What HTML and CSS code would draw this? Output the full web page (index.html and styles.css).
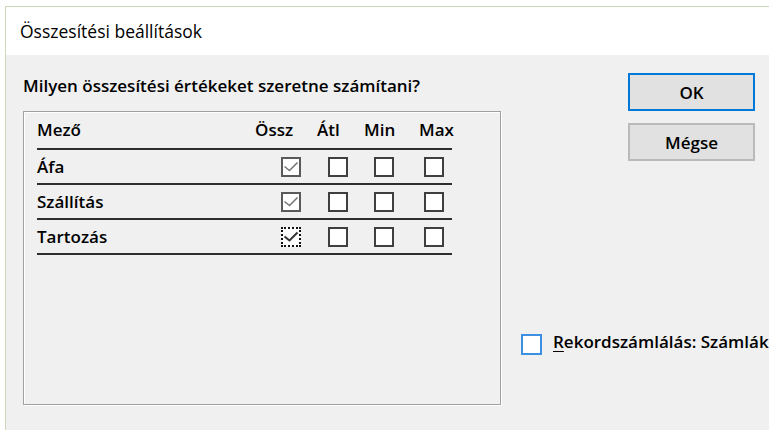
FILE: index.html
```html
<!DOCTYPE html>
<html lang="hu">
<head>
<meta charset="utf-8">
<title>Összesítési beállítások</title>
<link rel="stylesheet" href="styles.css">
</head>
<body>
<div class="window">
  <div class="titlebar">Összesítési beállítások</div>
  <div class="client">
    <div class="main">
      <div class="prompt">Milyen összesítési értékeket szeretne számítani?</div>
      <div class="group">
        <div class="sums">
          <div class="row head">
            <div class="field">Mező</div>
            <div class="cell">Össz</div>
            <div class="cell">Átl</div>
            <div class="cell">Min</div>
            <div class="cell">Max</div>
          </div>
          <div class="row">
            <div class="field">Áfa</div>
            <div class="cell col-sum"><span class="check checked"><svg viewBox="0 0 20 20"><polyline points="3.5,9.5 8.5,13.5 16.5,5.5"/></svg></span></div>
            <div class="cell col-avg"><span class="check"></span></div>
            <div class="cell col-min"><span class="check"></span></div>
            <div class="cell col-max"><span class="check"></span></div>
          </div>
          <div class="row">
            <div class="field">Szállítás</div>
            <div class="cell col-sum"><span class="check checked"><svg viewBox="0 0 20 20"><polyline points="3.5,9.5 8.5,13.5 16.5,5.5"/></svg></span></div>
            <div class="cell col-avg"><span class="check"></span></div>
            <div class="cell col-min"><span class="check"></span></div>
            <div class="cell col-max"><span class="check"></span></div>
          </div>
          <div class="row">
            <div class="field">Tartozás</div>
            <div class="cell col-sum"><span class="check checked focused"><svg viewBox="0 0 20 20"><polyline points="3.5,9.5 8.5,13.5 16.5,5.5"/></svg></span></div>
            <div class="cell col-avg"><span class="check"></span></div>
            <div class="cell col-min"><span class="check"></span></div>
            <div class="cell col-max"><span class="check"></span></div>
          </div>
        </div>
      </div>
    </div>
    <div class="side">
      <button class="btn default" type="button">OK</button>
      <button class="btn" type="button">Mégse</button>
      <label class="record">
        <span class="record-box"></span>
        <span class="record-text"><u>R</u>ekordszámlálás: Számlák</span>
      </label>
    </div>
  </div>
</div>
</body>
</html>
```

FILE: styles.css
```css
html, body {
  margin: 0;
  padding: 0;
  background: #ffffff;
  overflow: hidden;
}

body {
  font-family: "Open Sans", "Noto Sans", "DejaVu Sans", sans-serif;
  color: #000000;
}

/* dialog frame: thin tinted edge along top and left */
.window {
  margin: 6px 0 0 5px;
  width: calc(100vw - 5px);
  border-top: 1px solid #cdd9bd;
  border-left: 1px solid #cdd9bd;
  box-sizing: border-box;
}

.titlebar {
  height: 48px;
  line-height: 48px;
  padding-left: 14px;
  font-size: 17.5px;
  font-weight: 400;
  background: #ffffff;
}

.client {
  box-sizing: border-box;
  display: flex;
  align-items: flex-start;
  height: 375px;
  padding: 18px 0 0 17px;
  background: #f0f0f0;
  overflow: hidden;
}

.main {
  width: 478px;
  flex: none;
}

.prompt {
  margin-top: 3px;
  font-size: 17px;
  font-weight: 600;
  line-height: 20px;
  white-space: nowrap;
}

/* etched group frame */
.group {
  box-sizing: border-box;
  margin-top: 15px;
  height: 294px;
  padding: 0 0 0 13px;
  border: 1px solid #a0a0a0;
  box-shadow: 1px 1px 0 #ffffff, inset 1px 1px 0 #ffffff;
}

.sums {
  width: 415px;
}

.row {
  display: grid;
  grid-template-columns: 218px 62px 47px 55px 33px;
  align-items: center;
  height: 33px;
  border-bottom: 2px solid #2e2e2e;
  font-size: 17px;
  font-weight: 600;
  line-height: 24px;
}

.row.head {
  height: 38px;
  box-sizing: border-box;
  align-items: end;
  padding-bottom: 6px;
}

.field {
  white-space: nowrap;
}

.cell {
  display: flex;
  white-space: nowrap;
}

.col-sum .check { margin-left: 26px; }
.col-avg .check { margin-left: 11px; }
.col-min .check { margin-left: 10px; }
.col-max .check { margin-left: 5px; }

.check {
  box-sizing: border-box;
  display: block;
  flex: none;
  position: relative;
  width: 20px;
  height: 20px;
  background: #ffffff;
  border: 2px solid #3f3f3f;
}

.check svg {
  position: absolute;
  left: -2px;
  top: -2px;
  width: 20px;
  height: 20px;
}

.check polyline {
  fill: none;
  stroke: #777777;
  stroke-width: 1.6;
}

.check.checked {
  border-color: #5a5a5a;
}

.check.focused {
  border: 2px dotted #111111;
}

.check.focused polyline {
  stroke: #333333;
  stroke-width: 2;
}

.side {
  display: flex;
  flex-direction: column;
  margin-left: 20px;
}

.btn {
  box-sizing: border-box;
  width: 127px;
  height: 38px;
  margin-left: 107px;
  padding: 0;
  background: #e1e1e1;
  border: 2px solid #bababa;
  border-radius: 0;
  font-family: inherit;
  font-size: 17px;
  font-weight: 600;
  color: #000000;
}

.btn + .btn {
  margin-top: 12px;
}

.btn.default {
  border-color: #0078d7;
}

.record {
  display: flex;
  align-items: center;
  gap: 11px;
  margin-top: 169px;
  font-size: 17px;
  font-weight: 600;
  line-height: 24px;
  white-space: nowrap;
}

.record-box {
  box-sizing: border-box;
  width: 21px;
  height: 21px;
  flex: none;
  background: #ffffff;
  border: 2px solid #3d8fe3;
}

.record-text {
  margin-bottom: 4px;
}

.record-text u {
  text-underline-offset: 3px;
}
```
